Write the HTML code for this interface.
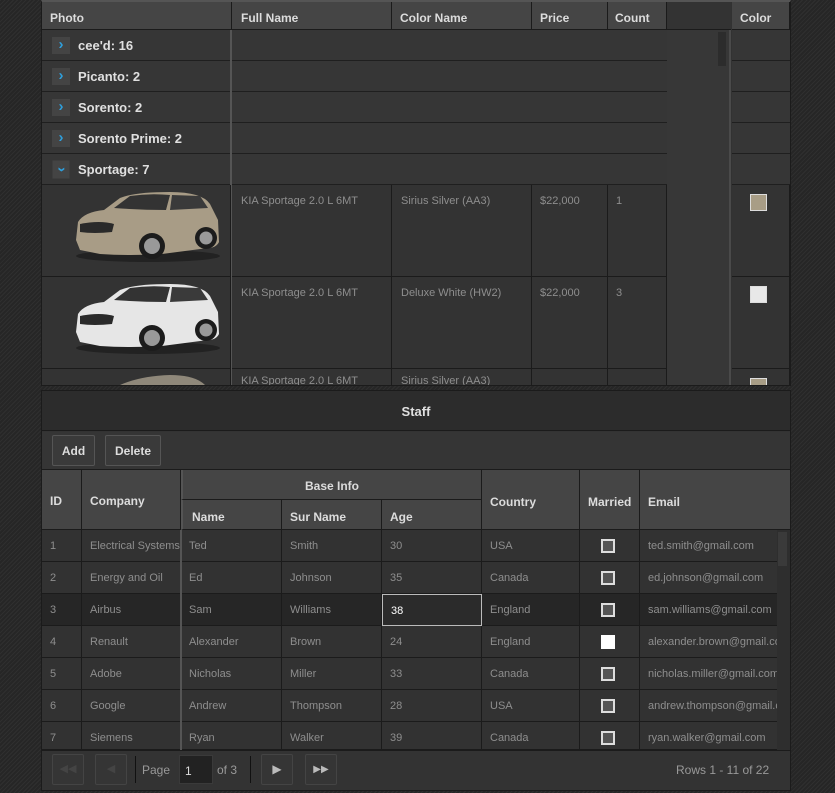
<!DOCTYPE html>
<html><head><meta charset="utf-8">
<style>
*{box-sizing:border-box;margin:0;padding:0}
body{width:835px;height:793px;overflow:hidden;position:relative;font-family:"Liberation Sans","DejaVu Sans",sans-serif;font-size:12px;
background:#2b2b2b repeating-linear-gradient(135deg,#2f2f2f 0 1px,#262626 1px 3px);}
.a{position:absolute}
.h{position:absolute;background:#454545;color:#dcdcdc;font-weight:bold;font-size:12px;border-right:1px solid #1b1b1b;border-bottom:1px solid #1b1b1b}
.c{position:absolute;color:#8e8e8e;font-size:11px;white-space:nowrap;overflow:hidden;border-right:1px solid #1b1b1b;border-bottom:1px solid #1b1b1b}
.g{position:absolute;background:#363636;border-bottom:1px solid #1f1f1f;color:#e0e0e0;font-weight:bold;font-size:13px}
.ex{position:absolute;left:10px;top:7px;width:18px;height:17px;background:#444;color:#2f9fdc;font-size:15px;text-align:center;line-height:16px;font-weight:bold}
.cb{position:absolute;width:14px;height:14px;border:2px solid #ddd;background:#555}
.btn{position:absolute;border:1px solid #555;background:#3a3a3a;color:#ddd;font-weight:bold;font-size:12px;text-align:center;line-height:30px;border-radius:2px}
.pb{position:absolute;top:754px;width:32px;height:31px;border:1px solid #444;background:#353535;border-radius:2px}
</style></head><body>

<div class="a" style="left:41px;top:0;width:750px;height:386px;background:#323232;border:1px solid #1b1b1b;border-top:2px solid #555;overflow:hidden"></div>
<div class="h" style="left:42px;top:2px;width:190px;height:28px;padding:9px 0 0 8px">Photo</div>
<div class="h" style="left:232px;top:2px;width:160px;height:28px;padding:9px 0 0 9px">Full Name</div>
<div class="h" style="left:392px;top:2px;width:140px;height:28px;padding:9px 0 0 8px">Color Name</div>
<div class="h" style="left:532px;top:2px;width:76px;height:28px;padding:9px 0 0 8px">Price</div>
<div class="h" style="left:608px;top:2px;width:59px;height:28px;padding:9px 0 0 7px">Count</div>
<div class="a" style="left:667px;top:2px;width:64px;height:28px;background:#333;border-bottom:1px solid #1b1b1b"></div>
<div class="h" style="left:732px;top:2px;width:58px;height:28px;padding:9px 0 0 8px">Color</div>

<div class="g" style="left:42px;top:30px;width:625px;height:31px"><div class="ex">›</div><span class="a" style="left:36px;top:8px">cee'd: 16</span></div>
<div class="g" style="left:42px;top:61px;width:625px;height:31px"><div class="ex">›</div><span class="a" style="left:36px;top:8px">Picanto: 2</span></div>
<div class="g" style="left:42px;top:92px;width:625px;height:31px"><div class="ex">›</div><span class="a" style="left:36px;top:8px">Sorento: 2</span></div>
<div class="g" style="left:42px;top:123px;width:625px;height:31px"><div class="ex">›</div><span class="a" style="left:36px;top:8px">Sorento Prime: 2</span></div>
<div class="g" style="left:42px;top:154px;width:625px;height:31px"><div class="ex" style="transform:rotate(90deg)">›</div><span class="a" style="left:36px;top:8px">Sportage: 7</span></div>
<div class="a" style="left:230px;top:30px;width:2px;height:355px;background:#555"></div>
<div class="a" style="left:667px;top:30px;width:64px;height:355px;background:#373737;border-right:2px solid #4a4a4a"></div>
<div class="a" style="left:718px;top:32px;width:8px;height:34px;background:#2c2c2c"></div>
<div class="a" style="left:732px;top:30px;width:58px;height:155px;background:repeating-linear-gradient(#363636 0 30px,#1f1f1f 30px 31px)"></div>

<div class="c" style="left:42px;top:185px;width:189px;height:92px;background:#333"></div>
<div class="c" style="left:232px;top:185px;width:160px;height:92px;padding:10px 0 0 9px;background:#333">KIA Sportage 2.0 L 6MT</div>
<div class="c" style="left:392px;top:185px;width:140px;height:92px;padding:10px 0 0 9px;background:#333">Sirius Silver (AA3)</div>
<div class="c" style="left:532px;top:185px;width:76px;height:92px;padding:10px 0 0 8px;background:#333">$22,000</div>
<div class="c" style="left:608px;top:185px;width:59px;height:92px;padding:10px 0 0 8px;background:#333">1</div>
<div class="c" style="left:732px;top:185px;width:58px;height:92px;background:#333"><div class="a" style="left:18px;top:9px;width:17px;height:17px;background:#a89d86;border:1px solid #ddd"></div></div>

<div class="c" style="left:42px;top:277px;width:189px;height:92px;background:#333"></div>
<div class="c" style="left:232px;top:277px;width:160px;height:92px;padding:10px 0 0 9px;background:#333">KIA Sportage 2.0 L 6MT</div>
<div class="c" style="left:392px;top:277px;width:140px;height:92px;padding:10px 0 0 9px;background:#333">Deluxe White (HW2)</div>
<div class="c" style="left:532px;top:277px;width:76px;height:92px;padding:10px 0 0 8px;background:#333">$22,000</div>
<div class="c" style="left:608px;top:277px;width:59px;height:92px;padding:10px 0 0 8px;background:#333">3</div>
<div class="c" style="left:732px;top:277px;width:58px;height:92px;background:#333"><div class="a" style="left:18px;top:9px;width:17px;height:17px;background:#e8e8e8;border:1px solid #ddd"></div></div>

<div class="c" style="left:42px;top:369px;width:189px;height:16px;background:#333;border-bottom:0"></div>
<div class="c" style="left:232px;top:369px;width:160px;height:16px;padding:6px 0 0 9px;background:#333;border-bottom:0">KIA Sportage 2.0 L 6MT</div>
<div class="c" style="left:392px;top:369px;width:140px;height:16px;padding:6px 0 0 9px;background:#333;border-bottom:0">Sirius Silver (AA3)</div>
<div class="c" style="left:532px;top:369px;width:76px;height:16px;background:#333;border-bottom:0"></div>
<div class="c" style="left:608px;top:369px;width:59px;height:16px;background:#333;border-bottom:0"></div>
<div class="c" style="left:732px;top:369px;width:58px;height:16px;background:#333;border-bottom:0"><div class="a" style="left:18px;top:9px;width:17px;height:17px;background:#a89d86;border:1px solid #ddd"></div></div>

<svg class="a" style="left:70px;top:190px" width="152" height="76" viewBox="0 0 152 76">
<ellipse cx="78" cy="66" rx="72" ry="6" fill="#222"/>
<path d="M6 50 L8 32 Q14 22 34 20 L50 8 Q64 2 100 2 Q132 2 140 14 L148 30 L149 52 Q146 58 138 58 L92 64 Q60 66 30 64 L10 60 Z" fill="#a89c86"/>
<path d="M44 18 L60 6 Q80 3 100 5 L96 20 Q70 20 44 18Z" fill="#333"/>
<path d="M102 5 L130 6 L138 18 L100 20Z" fill="#3a3a3a"/>
<path d="M10 34 Q30 30 44 34 L42 42 Q24 44 10 42Z" fill="#2a2a2a"/>
<circle cx="82" cy="56" r="13" fill="#1c1c1c"/><circle cx="82" cy="56" r="8" fill="#999"/>
<circle cx="136" cy="48" r="11" fill="#1c1c1c"/><circle cx="136" cy="48" r="6.5" fill="#999"/>
</svg>
<svg class="a" style="left:70px;top:282px" width="152" height="76" viewBox="0 0 152 76">
<ellipse cx="78" cy="66" rx="72" ry="6" fill="#222"/>
<path d="M6 50 L8 32 Q14 22 34 20 L50 8 Q64 2 100 2 Q132 2 140 14 L148 30 L149 52 Q146 58 138 58 L92 64 Q60 66 30 64 L10 60 Z" fill="#e6e6e6"/>
<path d="M44 18 L60 6 Q80 3 100 5 L96 20 Q70 20 44 18Z" fill="#333"/>
<path d="M102 5 L130 6 L138 18 L100 20Z" fill="#3a3a3a"/>
<path d="M10 34 Q30 30 44 34 L42 42 Q24 44 10 42Z" fill="#2a2a2a"/>
<circle cx="82" cy="56" r="13" fill="#1c1c1c"/><circle cx="82" cy="56" r="8" fill="#999"/>
<circle cx="136" cy="48" r="11" fill="#1c1c1c"/><circle cx="136" cy="48" r="6.5" fill="#999"/>
</svg>
<svg class="a" style="left:110px;top:374px" width="100" height="11"><path d="M10 11 Q30 2 60 1 Q85 1 95 11Z" fill="#8f887a"/></svg>

<div class="a" style="left:41px;top:390px;width:750px;height:401px;background:#333;border:1px solid #1b1b1b"></div>
<div class="a" style="left:42px;top:391px;width:748px;height:40px;background:#2c2c2c;border-bottom:1px solid #1b1b1b;color:#e0e0e0;font-weight:bold;font-size:13px;text-align:center;line-height:42px">Staff</div>
<div class="a" style="left:42px;top:432px;width:748px;height:38px;background:#353535;border-bottom:1px solid #1b1b1b"></div>
<div class="btn" style="left:52px;top:435px;width:43px;height:31px">Add</div>
<div class="btn" style="left:105px;top:435px;width:56px;height:31px">Delete</div>

<div class="h" style="left:42px;top:470px;width:40px;height:60px;padding:24px 0 0 8px">ID</div>
<div class="h" style="left:82px;top:470px;width:99px;height:60px;padding:24px 0 0 8px">Company</div>
<div class="h" style="left:181px;top:470px;width:301px;height:30px;text-align:center;padding-top:9px;border-left:2px solid #555">Base Info</div>
<div class="h" style="left:181px;top:500px;width:101px;height:30px;padding:10px 0 0 9px;border-left:2px solid #555">Name</div>
<div class="h" style="left:282px;top:500px;width:100px;height:30px;padding:10px 0 0 8px">Sur Name</div>
<div class="h" style="left:382px;top:500px;width:100px;height:30px;padding:10px 0 0 8px">Age</div>
<div class="h" style="left:482px;top:470px;width:98px;height:60px;padding:25px 0 0 8px">Country</div>
<div class="h" style="left:580px;top:470px;width:60px;height:60px;padding:25px 0 0 8px">Married</div>
<div class="h" style="left:640px;top:470px;width:150px;height:60px;padding:25px 0 0 8px;border-right:0">Email</div>

<div id="rows"></div>
<script>
var d=[["1","Electrical Systems","Ted","Smith","30","USA",0,"ted.smith@gmail.com"],
["2","Energy and Oil","Ed","Johnson","35","Canada",0,"ed.johnson@gmail.com"],
["3","Airbus","Sam","Williams","38","England",0,"sam.williams@gmail.com"],
["4","Renault","Alexander","Brown","24","England",1,"alexander.brown@gmail.com"],
["5","Adobe","Nicholas","Miller","33","Canada",0,"nicholas.miller@gmail.com"],
["6","Google","Andrew","Thompson","28","USA",0,"andrew.thompson@gmail.com"],
["7","Siemens","Ryan","Walker","39","Canada",0,"ryan.walker@gmail.com"]];
var cols=[[42,40],[82,99],[181,101],[282,100],[382,100],[482,98],[580,60],[640,137]];
var h="";
d.forEach(function(r,i){var t=530+i*32,hh=i==6?28:32,bg=i==2?"#262626":"#323232";
cols.forEach(function(c,j){var st="left:"+c[0]+"px;top:"+t+"px;width:"+c[1]+"px;height:"+hh+"px;background:"+bg+";padding:10px 0 0 8px;";
if(j==6){h+='<div class="c" style="'+st+'"><div class="cb" style="left:21px;top:9px;'+(r[6]?'background:#fff;border-color:#fff':'')+'"></div></div>';}
else if(j==4&&i==2){h+='<div class="c" style="'+st+'background:#2b2b2b;border:1px solid #bbb;color:#fff">'+r[4]+'</div>';}
else h+='<div class="c" style="'+st+(j==7?'border-right:0;':'')+'">'+r[j]+'</div>';});});
document.getElementById("rows").innerHTML=h;
</script>
<div class="a" style="left:180px;top:530px;width:2px;height:220px;background:#555"></div>
<div class="a" style="left:777px;top:530px;width:13px;height:220px;background:#2e2e2e"></div>
<div class="a" style="left:778px;top:532px;width:9px;height:34px;background:#3a3a3a"></div>

<div class="a" style="left:42px;top:750px;width:748px;height:40px;background:#333;border-top:1px solid #1b1b1b"></div>
<div class="pb" style="left:52px;color:#444;text-align:center;line-height:29px;font-size:11px">◀◀</div>
<div class="pb" style="left:95px;color:#444;text-align:center;line-height:29px;font-size:11px">◀</div>
<div class="a" style="left:135px;top:756px;width:1px;height:27px;background:#111"></div>
<div class="a" style="left:142px;top:763px;color:#999;font-size:12px">Page</div>
<div class="a" style="left:179px;top:755px;width:34px;height:29px;background:#222;border:1px solid #3a3a3a;color:#ddd;padding:8px 0 0 5px">1</div>
<div class="a" style="left:217px;top:763px;color:#999;font-size:12px">of 3</div>
<div class="a" style="left:250px;top:756px;width:1px;height:27px;background:#111"></div>
<div class="pb" style="left:261px;color:#bbb;text-align:center;line-height:29px;font-size:12px">▶</div>
<div class="pb" style="left:305px;color:#bbb;text-align:center;line-height:29px;font-size:10px">▶▶</div>
<div class="a" style="left:676px;top:763px;color:#999;font-size:12px">Rows 1 - 11 of 22</div>
</body></html>
